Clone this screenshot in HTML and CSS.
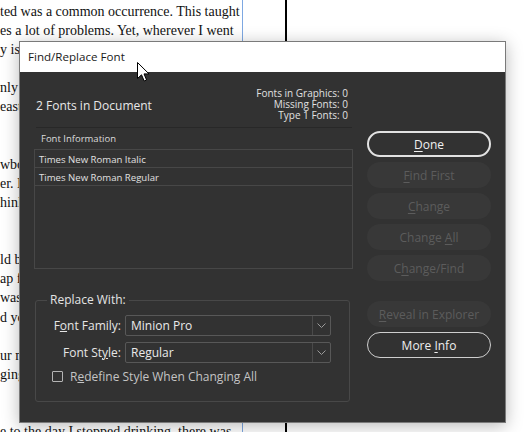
FILE: index.html
```html
<!DOCTYPE html>
<html>
<head>
<meta charset="utf-8">
<link rel="stylesheet" href="styles.css">
</head>
<body>
<div class="desk">
  <div class="frame">
    <div class="text">
      <div class="line">ted was a common occurrence. This taught</div>
      <div class="line">es a lot of problems. Yet, wherever I went</div>
      <div class="line">y is what it always was, and so I followed</div>
      <div class="line">&nbsp;</div>
      <div class="line">nly one who could change what happened</div>
      <div class="line">east that was what I told myself each day.</div>
      <div class="line">&nbsp;</div>
      <div class="line">&nbsp;</div>
      <div class="line">wboy hat hung on the hook by the door</div>
      <div class="line">er. I never wore it, but I liked to see it</div>
      <div class="line">hink about the roads that led out of town.</div>
      <div class="line">&nbsp;</div>
      <div class="line">&nbsp;</div>
      <div class="line">ld be different this time, that I would</div>
      <div class="line">ap for good and start over somewhere new</div>
      <div class="line">was always the same, no matter where</div>
      <div class="line">d you take yourself with you wherever</div>
      <div class="line">&nbsp;</div>
      <div class="line">ur mistakes follow you like a shadow,</div>
      <div class="line">ging on until you finally turn around.</div>
      <div class="line">&nbsp;</div>
      <div class="line">&nbsp;</div>
      <div class="line">e to the day I stopped drinking, there was</div>
    </div>
  </div>
  <div class="gutter"></div>
  <div class="edge"></div>
  <div class="paper"></div>
</div>

<div class="dialog">
  <div class="titlebar">Find/Replace Font</div>
  <div class="dbody">
    <div class="left">
      <div class="summary">
        <div class="count">2 Fonts in Document</div>
        <div class="stats">
          <div>Fonts in Graphics: 0</div>
          <div>Missing Fonts: 0</div>
          <div>Type 1 Fonts: 0</div>
        </div>
      </div>
      <div class="list-head">Font Information</div>
      <div class="table">
        <div class="row">Times New Roman Italic</div>
        <div class="row">Times New Roman Regular</div>
      </div>
      <fieldset class="replace">
        <legend>Replace With:</legend>
        <div class="form">
          <label class="lbl">F<u>o</u>nt Family:</label>
          <div class="select"><span class="val">Minion Pro</span><span class="arrow"><svg width="9" height="5" viewBox="0 0 9 5"><polyline points="0.5,0.5 4.5,4.5 8.5,0.5" fill="none" stroke="#9a9a9a" stroke-width="1"/></svg></span></div>
          <label class="lbl">Font St<u>y</u>le:</label>
          <div class="select"><span class="val">Regular</span><span class="arrow"><svg width="9" height="5" viewBox="0 0 9 5"><polyline points="0.5,0.5 4.5,4.5 8.5,0.5" fill="none" stroke="#9a9a9a" stroke-width="1"/></svg></span></div>
        </div>
        <div class="check"><span class="box"></span><span class="check-text">R<u>e</u>define Style When Changing All</span></div>
      </fieldset>
    </div>
    <div class="buttons">
      <div class="btn primary"><span><u>D</u>one</span></div>
      <div class="btn disabled"><span><u>F</u>ind First</span></div>
      <div class="btn disabled"><span><u>C</u>hange</span></div>
      <div class="btn disabled"><span>Change <u>A</u>ll</span></div>
      <div class="btn disabled"><span>C<u>h</u>ange/Find</span></div>
      <div class="btn disabled spaced"><span><u>R</u>eveal in Explorer</span></div>
      <div class="btn outline"><span>More <u>I</u>nfo</span></div>
    </div>
  </div>
</div>

<svg class="cursor" width="13" height="20" viewBox="0 0 13 20">
  <path d="M0.5,0.5 L0.5,16.5 L4.5,12.8 L7.2,19 L9.6,18 L7,11.9 L12,11.9 Z" fill="#fff" stroke="#000" stroke-width="1" stroke-linejoin="miter"/>
</svg>
</body>
</html>
```

FILE: styles.css
```css
html, body {
  margin: 0;
  padding: 0;
  background: #ffffff;
  width: 525px;
  height: 432px;
  overflow: hidden;
}

.desk {
  display: flex;
  height: 432px;
  width: 525px;
}

.frame {
  width: 242px;
  flex: none;
  border-right: 1px solid #7ea8e2;
  overflow: hidden;
}

.text {
  padding-top: 2px;
  font-family: "Liberation Serif", "Times New Roman", serif;
  font-size: 14px;
  color: #111;
}

.line {
  height: 19.1px;
  line-height: 19.1px;
  white-space: nowrap;
}

.gutter {
  width: 42px;
  flex: none;
}

.edge {
  width: 2px;
  flex: none;
  background: #000;
}

.paper {
  flex: 1;
}

.dialog {
  position: absolute;
  left: 19px;
  top: 41px;
  width: 485px;
  height: 380px;
  border: 1px solid #7a7a7a;
  background: #323232;
  box-shadow: 0 3px 16px rgba(0, 0, 0, 0.28);
  font-family: "Open Sans", "Noto Sans", sans-serif;
  color: #e4e4e4;
  display: flex;
  flex-direction: column;
}

.titlebar {
  height: 30px;
  line-height: 30px;
  background: #ffffff;
  color: #1a1a1a;
  font-size: 11.6px;
  padding-left: 8px;
}

.dbody {
  display: flex;
  gap: 14px;
  padding: 14px 14px 0 14px;
}

.left {
  width: 319px;
  display: flex;
  flex-direction: column;
}

.summary {
  height: 37px;
  padding-bottom: 4px;
  margin: 0 1px 0 2px;
  border-bottom: 1px solid #282828;
  display: flex;
  align-items: center;
  justify-content: space-between;
}

.count {
  font-size: 12px;
  color: #e8e8e8;
  padding-top: 2px;
}

.stats {
  font-size: 10px;
  line-height: 11.3px;
  text-align: right;
  padding-right: 4px;
  color: #e0e0e0;
}

.list-head {
  height: 21px;
  line-height: 22px;
  font-size: 9.5px;
  padding-left: 7px;
  color: #dcdcdc;
}

.table {
  height: 118px;
  border: 1px solid #474747;
}

.row {
  height: 17px;
  line-height: 19px;
  border-bottom: 1px solid #474747;
  font-size: 9.6px;
  padding-left: 4px;
  color: #e0e0e0;
}

.replace {
  margin: 23px 3px 0 1px;
  padding: 7px 0 17px 0;
  border: 1px solid #484848;
  border-radius: 3px;
  min-width: 0;
}

.replace legend {
  margin-left: 11px;
  padding: 0 3px;
  font-size: 12px;
  line-height: 16px;
  color: #e4e4e4;
}

.form {
  display: grid;
  grid-template-columns: 85px 206px;
  column-gap: 4px;
  row-gap: 6px;
  align-items: center;
}

.lbl {
  text-align: right;
  font-size: 12px;
  color: #e6e6e6;
}

.select {
  height: 19px;
  border: 1px solid #585858;
  border-radius: 2px;
  display: flex;
  align-items: center;
  font-size: 12px;
  color: #eaeaea;
}

.val {
  flex: 1;
  padding-left: 5px;
}

.arrow {
  width: 17px;
  height: 19px;
  border-left: 1px solid #4a4a4a;
  display: flex;
  align-items: center;
  justify-content: center;
}

.arrow svg {
  display: block;
}

.check {
  display: flex;
  align-items: center;
  gap: 7px;
  margin-top: 5px;
  padding-left: 16px;
  height: 16px;
}

.box {
  width: 9px;
  height: 9px;
  border: 1px solid #b4b4b4;
  border-radius: 1px;
}

.check-text {
  font-size: 12px;
  color: #c4c4c4;
}

.buttons {
  width: 124px;
  display: flex;
  flex-direction: column;
  gap: 5px;
  padding-top: 45px;
}

.btn {
  height: 26px;
  box-sizing: border-box;
  border-radius: 13px;
  display: flex;
  align-items: center;
  justify-content: center;
  font-size: 12px;
  white-space: nowrap;
}

.btn u {
  text-underline-offset: 2px;
}

.primary {
  border: 2px solid #e2e2e2;
  color: #f0f0f0;
}

.disabled {
  background: #383838;
  color: #5c5c5c;
}

.spaced {
  margin-top: 15px;
}

.outline {
  border: 1px solid #cfcfcf;
  color: #eeeeee;
}

.cursor {
  position: absolute;
  left: 137px;
  top: 62px;
}
```
